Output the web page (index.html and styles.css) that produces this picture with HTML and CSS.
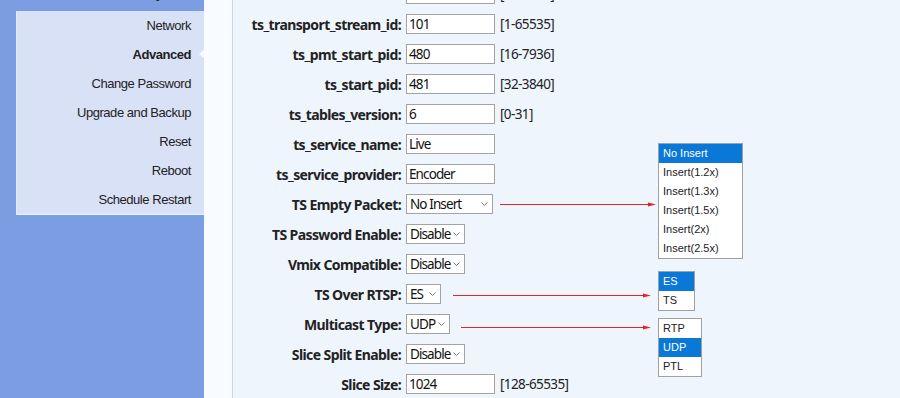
FILE: index.html
```html
<!DOCTYPE html>
<html lang="en">
<head>
  <meta charset="UTF-8">
  <meta name="viewport" content="width=device-width, initial-scale=1.0">
  <title>Advanced Settings</title>
  <link rel="stylesheet" href="styles.css">
</head>
<body>
  <div class="page">
    <!-- Menu kiri -->
    <aside class="sidebar">
      <div class="sidebar-head">System</div>
      <ul class="submenu">
        <li>Network</li>
        <li class="active">Advanced</li>
        <li>Change Password</li>
        <li>Upgrade and Backup</li>
        <li>Reset</li>
        <li>Reboot</li>
        <li>Schedule Restart</li>
      </ul>
    </aside>

    <div class="gutter"></div>

    <!-- Form pengaturan TS -->
    <main class="content">
      <form class="settings">
        <div class="row">
          <label>TS Mux Rate:</label>
          <input type="text" value="1">
          <span class="range">[1-65535]</span>
        </div>
        <div class="row">
          <label>ts_transport_stream_id:</label>
          <input type="text" value="101">
          <span class="range">[1-65535]</span>
        </div>
        <div class="row">
          <label>ts_pmt_start_pid:</label>
          <input type="text" value="480">
          <span class="range">[16-7936]</span>
        </div>
        <div class="row">
          <label>ts_start_pid:</label>
          <input type="text" value="481">
          <span class="range">[32-3840]</span>
        </div>
        <div class="row">
          <label>ts_tables_version:</label>
          <input type="text" value="6">
          <span class="range">[0-31]</span>
        </div>
        <div class="row">
          <label>ts_service_name:</label>
          <input type="text" value="Live">
        </div>
        <div class="row">
          <label>ts_service_provider:</label>
          <input type="text" value="Encoder">
        </div>
        <div class="row">
          <label>TS Empty Packet:</label>
          <span class="select w-insert">No Insert<svg class="chev" viewBox="0 0 7 4"><path d="M0.5 0.5 L3.5 3.5 L6.5 0.5"/></svg></span>
        </div>
        <div class="row">
          <label>TS Password Enable:</label>
          <span class="select w-disable">Disable<svg class="chev" viewBox="0 0 7 4"><path d="M0.5 0.5 L3.5 3.5 L6.5 0.5"/></svg></span>
        </div>
        <div class="row">
          <label>Vmix Compatible:</label>
          <span class="select w-disable">Disable<svg class="chev" viewBox="0 0 7 4"><path d="M0.5 0.5 L3.5 3.5 L6.5 0.5"/></svg></span>
        </div>
        <div class="row">
          <label>TS Over RTSP:</label>
          <span class="select w-es">ES<svg class="chev" viewBox="0 0 7 4"><path d="M0.5 0.5 L3.5 3.5 L6.5 0.5"/></svg></span>
        </div>
        <div class="row">
          <label>Multicast Type:</label>
          <span class="select w-udp">UDP<svg class="chev" viewBox="0 0 7 4"><path d="M0.5 0.5 L3.5 3.5 L6.5 0.5"/></svg></span>
        </div>
        <div class="row">
          <label>Slice Split Enable:</label>
          <span class="select w-disable">Disable<svg class="chev" viewBox="0 0 7 4"><path d="M0.5 0.5 L3.5 3.5 L6.5 0.5"/></svg></span>
        </div>
        <div class="row">
          <label>Slice Size:</label>
          <input type="text" value="1024">
          <span class="range">[128-65535]</span>
        </div>
      </form>
    </main>

    <!-- Anotasi: panah dan daftar pilihan -->
    <svg class="arrow arrow-empty" width="156" height="7" viewBox="0 0 156 7"><line x1="0" y1="3.5" x2="150" y2="3.5"/><path d="M148 1.5 L156 3.5 L148 5.5 Z"/></svg>
    <svg class="arrow arrow-rtsp" width="198" height="7" viewBox="0 0 198 7"><line x1="0" y1="3.5" x2="192" y2="3.5"/><path d="M190 1.5 L198 3.5 L190 5.5 Z"/></svg>
    <svg class="arrow arrow-mcast" width="190" height="7" viewBox="0 0 190 7"><line x1="0" y1="3.5" x2="184" y2="3.5"/><path d="M182 1.5 L190 3.5 L182 5.5 Z"/></svg>

    <ul class="dropdown dd-empty">
      <li class="selected">No Insert</li>
      <li>Insert(1.2x)</li>
      <li>Insert(1.3x)</li>
      <li>Insert(1.5x)</li>
      <li>Insert(2x)</li>
      <li>Insert(2.5x)</li>
    </ul>
    <ul class="dropdown dd-rtsp">
      <li class="selected">ES</li>
      <li>TS</li>
    </ul>
    <ul class="dropdown dd-mcast">
      <li>RTP</li>
      <li class="selected">UDP</li>
      <li>PTL</li>
    </ul>
  </div>
</body>
</html>
```

FILE: styles.css
```css
body {
  margin: 0;
  background-color: #eef5fd;
  color: #222;
  overflow: hidden;
}

.page {
  position: relative;
  display: flex;
  height: 398px;
  overflow: hidden;
}

/* menu kiri */
.sidebar {
  flex: none;
  width: 204px;
  background-color: #7b9de1;
  font-family: "Liberation Sans", Arial, sans-serif;
  font-size: 13px;
  letter-spacing: -0.45px;
}

.sidebar-head {
  height: 29px;
  margin-top: -18px;
  line-height: 23px;
  padding-right: 13px;
  text-align: right;
  font-weight: bold;
  color: #222;
}

.submenu {
  list-style: none;
  margin: 0 0 0 16px;
  padding: 0;
  background-color: #d9e1f7;
  border-bottom: 1px solid #eef2fb;
  border-left: 1px solid #e6ebf9;
}

.submenu li {
  height: 29px;
  line-height: 29px;
  padding-right: 13px;
  text-align: right;
}

.submenu li.active {
  position: relative;
  font-weight: bold;
}

.submenu li.active::after {
  content: "";
  position: absolute;
  right: 0;
  top: 10px;
  border-right: 5px solid #f8fbff;
  border-top: 4px solid transparent;
  border-bottom: 4px solid transparent;
}

.gutter {
  flex: none;
  width: 28px;
  background-color: #f8fbff;
  border-right: 1px solid #c9d5ea;
}

/* form */
.content {
  flex: 1;
  background-color: #eef5fd;
}

.settings {
  margin-top: -21px;
}

.row {
  display: flex;
  align-items: center;
  height: 30px;
  font-family: "Noto Sans", sans-serif;
}

.row label {
  width: 168px;
  margin-right: 5px;
  text-align: right;
  font-weight: bold;
  font-size: 14px;
  letter-spacing: -0.6px;
  white-space: nowrap;
}

.row input,
.select {
  box-sizing: border-box;
  height: 20px;
  border: 1px solid #a3a3a3;
  background: #fff;
  font-family: "Noto Sans", sans-serif;
  font-size: 13.5px;
  letter-spacing: -0.9px;
  color: #111;
}

.row input {
  width: 89px;
  padding: 0 2px;
}

.select {
  flex: none;
  display: inline-flex;
  align-items: center;
  justify-content: space-between;
  padding: 0 4px 0 3px;
  white-space: nowrap;
}

.w-insert { width: 87px; }
.w-disable { width: 59px; }
.w-es { width: 35px; }
.w-udp { width: 44px; }

.chev {
  flex: none;
  width: 7px;
  height: 4px;
  fill: none;
  stroke: #777;
  stroke-width: 1;
}

.range {
  margin-left: 5px;
  font-size: 13.5px;
  letter-spacing: -0.6px;
  color: #222;
}

/* anotasi */
.arrow {
  position: absolute;
}

.arrow line {
  stroke: #e0262a;
  stroke-width: 1.1;
}

.arrow path {
  fill: #e0262a;
}

.arrow-empty { left: 500px; top: 201px; }
.arrow-rtsp { left: 453px; top: 292px; }
.arrow-mcast { left: 461px; top: 324px; }

.dropdown {
  position: absolute;
  list-style: none;
  margin: 0;
  padding: 0;
  background: #fff;
  border: 1px solid #a0a0a0;
  font-family: "Liberation Sans", Arial, sans-serif;
  font-size: 11px;
  color: #222;
}

.dropdown li {
  height: 19px;
  line-height: 19px;
  padding-left: 4px;
}

.dropdown li.selected {
  background-color: #0a78d7;
  color: #fff;
}

.dd-empty { left: 658px; top: 143px; width: 83px; }
.dd-rtsp { left: 658px; top: 271px; width: 35px; }
.dd-mcast { left: 658px; top: 318px; width: 42px; }
```
